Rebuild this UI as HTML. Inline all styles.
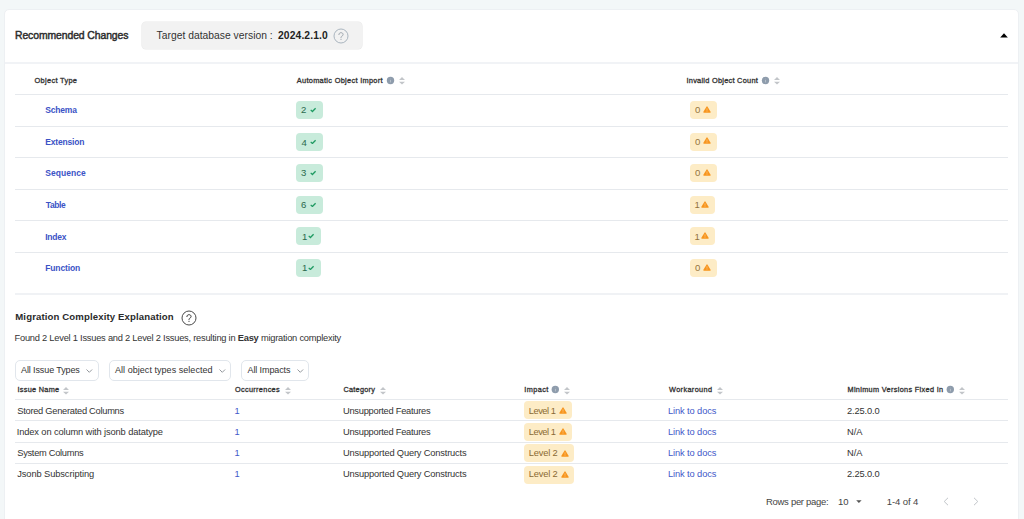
<!DOCTYPE html>
<html><head><meta charset="utf-8"><style>
html,body{margin:0;padding:0;}
body{width:1024px;height:519px;background:#f3f7f8;position:relative;overflow:hidden;font-family:"Liberation Sans",sans-serif;}
.card{position:absolute;left:4px;top:9px;width:1013px;height:540px;background:#fff;border:1px solid #edf0f3;border-radius:5px;}
.t{position:absolute;white-space:pre;line-height:0;}
.ic{position:absolute;}
.hl{position:absolute;height:1px;background:#e6e9ed;}
.sep{position:absolute;left:5px;width:1013px;top:62px;height:2px;background:#f1f3f6;}
.tdv{position:absolute;left:142px;top:22.2px;width:220px;height:27px;background:#f2f2f2;border-radius:4px;box-shadow:0 0 0 0.6px #e9e9e9;}
.q{position:absolute;}
.bg{position:absolute;height:18px;border-radius:4px;font-size:9.5px;line-height:18px;}
.bg span{position:absolute;left:5.5px;top:0;}
.bg svg{position:absolute;}
.g{background:#c8ebdb;color:#2d6f51;}
.o{background:#fdecc6;color:#9c7b3c;}
.dd{position:absolute;top:360.4px;height:18.6px;border:1px solid #e1e6ec;border-radius:5px;background:#fff;}
</style></head><body>
<div class="card"></div>
<div class="sep"></div>
<div class="tdv"></div>
<svg class="q" style="left:331.9px;top:26.799999999999997px" width="18" height="18" viewBox="0 0 18 18"><circle cx="9" cy="9" r="7" fill="none" stroke="#a2aeb9" stroke-width="0.9"/><path d="M6.9 7.6 C6.9 6.3 7.8 5.7 9 5.7 C10.2 5.7 11.1 6.4 11.1 7.5 C11.1 8.5 10.3 8.9 9.7 9.3 C9.2 9.6 9 10 9 10.8" stroke="#9ea6ae" stroke-width="1" fill="none" stroke-linecap="round"/><circle cx="9" cy="12.5" r="0.6" fill="#9ea6ae"/></svg>
<svg class="ic" style="left:1000px;top:32.9px" width="8" height="5" viewBox="0 0 8 5"><path d="M0.2 4.6 L4 0.3 L7.8 4.6Z" fill="#000"/></svg>
<svg class="q" style="left:179.7px;top:308.8px" width="18" height="18" viewBox="0 0 18 18"><circle cx="9" cy="9" r="7" fill="none" stroke="#4a4a4a" stroke-width="1.0"/><path d="M6.9 7.6 C6.9 6.3 7.8 5.7 9 5.7 C10.2 5.7 11.1 6.4 11.1 7.5 C11.1 8.5 10.3 8.9 9.7 9.3 C9.2 9.6 9 10 9 10.8" stroke="#3a3a3a" stroke-width="1" fill="none" stroke-linecap="round"/><circle cx="9" cy="12.5" r="0.6" fill="#3a3a3a"/></svg>
<div class="dd" style="left:15.3px;width:81.5px"></div>
<div class="dd" style="left:109.1px;width:119.5px"></div>
<div class="dd" style="left:241.1px;width:66px"></div>
<svg class="ic" style="left:85.8px;top:369.3px" width="7" height="4" viewBox="0 0 7 4"><path d="M0.5 0.5 L3.3 3.3 L6.1 0.5" stroke="#7a7f85" stroke-width="0.8" fill="none"/></svg>
<svg class="ic" style="left:218.6px;top:369.3px" width="7" height="4" viewBox="0 0 7 4"><path d="M0.5 0.5 L3.3 3.3 L6.1 0.5" stroke="#7a7f85" stroke-width="0.8" fill="none"/></svg>
<svg class="ic" style="left:296.6px;top:369.3px" width="7" height="4" viewBox="0 0 7 4"><path d="M0.5 0.5 L3.3 3.3 L6.1 0.5" stroke="#7a7f85" stroke-width="0.8" fill="none"/></svg>
<svg class="ic" style="left:855.8px;top:500px" width="6" height="3.5" viewBox="0 0 6 3.5"><path d="M0.2 0.2 L5.6 0.2 L2.9 3Z" fill="#555"/></svg>
<svg class="ic" style="left:943.2px;top:497px" width="6" height="9" viewBox="0 0 6 9"><path d="M5 0.8 L1.2 4.5 L5 8.2" stroke="#c0c4c8" stroke-width="1" fill="none"/></svg>
<svg class="ic" style="left:973px;top:497px" width="6" height="9" viewBox="0 0 6 9"><path d="M1 0.8 L4.8 4.5 L1 8.2" stroke="#c0c4c8" stroke-width="1" fill="none"/></svg>
<svg class="ic" style="left:385px;top:75px" width="10" height="10" viewBox="0 0 10 10"><circle cx="5.50" cy="5.50" r="3.7" fill="#8e9cac"/><rect x="5.17" y="5.00" width="0.66" height="2.4" fill="#c9d0d8"/><circle cx="5.50" cy="3.90" r="0.42" fill="#b5bec8"/></svg>
<svg class="ic" style="left:399px;top:77px" width="6" height="8" viewBox="0 0 6 8"><path d="M3 0 L6 2.9 L0 2.9Z M0 4.7 L6 4.7 L3 7.6Z" fill="#c2c5c9"/></svg>
<svg class="ic" style="left:760px;top:75px" width="10" height="10" viewBox="0 0 10 10"><circle cx="5.50" cy="5.50" r="3.7" fill="#8e9cac"/><rect x="5.17" y="5.00" width="0.66" height="2.4" fill="#c9d0d8"/><circle cx="5.50" cy="3.90" r="0.42" fill="#b5bec8"/></svg>
<svg class="ic" style="left:773.8px;top:77px" width="6" height="8" viewBox="0 0 6 8"><path d="M3 0 L6 2.9 L0 2.9Z M0 4.7 L6 4.7 L3 7.6Z" fill="#c2c5c9"/></svg>
<div class="hl" style="left:15px;width:993px;top:293px;height:2px;background:#f0f2f5"></div>
<div class="hl" style="left:15px;width:993px;top:94.0px"></div>
<div class="hl" style="left:15px;width:993px;top:125.5px"></div>
<div class="hl" style="left:15px;width:993px;top:157.1px"></div>
<div class="hl" style="left:15px;width:993px;top:188.6px"></div>
<div class="hl" style="left:15px;width:993px;top:220.2px"></div>
<div class="hl" style="left:15px;width:993px;top:251.7px"></div>
<div class="bg g" style="left:296px;top:101.00px;width:27px"><svg style="left:14.3px;top:6.2px" width="6.5" height="5.5" viewBox="0 0 6.5 5.5"><path d="M0.7 2.9 L2.4 4.5 L5.6 1.2" stroke="#1f9a62" stroke-width="1.3" fill="none"/></svg></div>
<div class="bg o" style="left:690px;top:101.00px;width:27px"><svg style="left:12.8px;top:4.9px" width="8" height="7" viewBox="0 0 8 7"><path d="M3.3 0.9 Q4 -0.2 4.7 0.9 L7.6 5.8 Q8.1 6.8 7 6.8 L1 6.8 Q-0.1 6.8 0.4 5.8Z" fill="#f7951d"/><rect x="3.65" y="2.3" width="0.7" height="2.4" fill="#fbc889"/><rect x="3.65" y="5.2" width="0.7" height="0.7" fill="#fbc889"/></svg></div>
<div class="bg g" style="left:296px;top:132.54px;width:27px"><svg style="left:14.3px;top:6.2px" width="6.5" height="5.5" viewBox="0 0 6.5 5.5"><path d="M0.7 2.9 L2.4 4.5 L5.6 1.2" stroke="#1f9a62" stroke-width="1.3" fill="none"/></svg></div>
<div class="bg o" style="left:690px;top:132.54px;width:27px"><svg style="left:12.8px;top:4.9px" width="8" height="7" viewBox="0 0 8 7"><path d="M3.3 0.9 Q4 -0.2 4.7 0.9 L7.6 5.8 Q8.1 6.8 7 6.8 L1 6.8 Q-0.1 6.8 0.4 5.8Z" fill="#f7951d"/><rect x="3.65" y="2.3" width="0.7" height="2.4" fill="#fbc889"/><rect x="3.65" y="5.2" width="0.7" height="0.7" fill="#fbc889"/></svg></div>
<div class="bg g" style="left:296px;top:164.08px;width:27px"><svg style="left:14.3px;top:6.2px" width="6.5" height="5.5" viewBox="0 0 6.5 5.5"><path d="M0.7 2.9 L2.4 4.5 L5.6 1.2" stroke="#1f9a62" stroke-width="1.3" fill="none"/></svg></div>
<div class="bg o" style="left:690px;top:164.08px;width:27px"><svg style="left:12.8px;top:4.9px" width="8" height="7" viewBox="0 0 8 7"><path d="M3.3 0.9 Q4 -0.2 4.7 0.9 L7.6 5.8 Q8.1 6.8 7 6.8 L1 6.8 Q-0.1 6.8 0.4 5.8Z" fill="#f7951d"/><rect x="3.65" y="2.3" width="0.7" height="2.4" fill="#fbc889"/><rect x="3.65" y="5.2" width="0.7" height="0.7" fill="#fbc889"/></svg></div>
<div class="bg g" style="left:296px;top:195.62px;width:27px"><svg style="left:14.3px;top:6.2px" width="6.5" height="5.5" viewBox="0 0 6.5 5.5"><path d="M0.7 2.9 L2.4 4.5 L5.6 1.2" stroke="#1f9a62" stroke-width="1.3" fill="none"/></svg></div>
<div class="bg o" style="left:690px;top:195.62px;width:25.2px"><svg style="left:10.9px;top:4.9px" width="8" height="7" viewBox="0 0 8 7"><path d="M3.3 0.9 Q4 -0.2 4.7 0.9 L7.6 5.8 Q8.1 6.8 7 6.8 L1 6.8 Q-0.1 6.8 0.4 5.8Z" fill="#f7951d"/><rect x="3.65" y="2.3" width="0.7" height="2.4" fill="#fbc889"/><rect x="3.65" y="5.2" width="0.7" height="0.7" fill="#fbc889"/></svg></div>
<div class="bg g" style="left:296px;top:227.16px;width:25px"><svg style="left:12.3px;top:6.2px" width="6.5" height="5.5" viewBox="0 0 6.5 5.5"><path d="M0.7 2.9 L2.4 4.5 L5.6 1.2" stroke="#1f9a62" stroke-width="1.3" fill="none"/></svg></div>
<div class="bg o" style="left:690px;top:227.16px;width:25.2px"><svg style="left:10.9px;top:4.9px" width="8" height="7" viewBox="0 0 8 7"><path d="M3.3 0.9 Q4 -0.2 4.7 0.9 L7.6 5.8 Q8.1 6.8 7 6.8 L1 6.8 Q-0.1 6.8 0.4 5.8Z" fill="#f7951d"/><rect x="3.65" y="2.3" width="0.7" height="2.4" fill="#fbc889"/><rect x="3.65" y="5.2" width="0.7" height="0.7" fill="#fbc889"/></svg></div>
<div class="bg g" style="left:296px;top:258.70px;width:25px"><svg style="left:12.3px;top:6.2px" width="6.5" height="5.5" viewBox="0 0 6.5 5.5"><path d="M0.7 2.9 L2.4 4.5 L5.6 1.2" stroke="#1f9a62" stroke-width="1.3" fill="none"/></svg></div>
<div class="bg o" style="left:690px;top:258.70px;width:27px"><svg style="left:12.8px;top:4.9px" width="8" height="7" viewBox="0 0 8 7"><path d="M3.3 0.9 Q4 -0.2 4.7 0.9 L7.6 5.8 Q8.1 6.8 7 6.8 L1 6.8 Q-0.1 6.8 0.4 5.8Z" fill="#f7951d"/><rect x="3.65" y="2.3" width="0.7" height="2.4" fill="#fbc889"/><rect x="3.65" y="5.2" width="0.7" height="0.7" fill="#fbc889"/></svg></div>
<div class="hl" style="left:15px;width:993px;top:398.7px"></div>
<div class="hl" style="left:15px;width:993px;top:420.1px"></div>
<div class="hl" style="left:15px;width:993px;top:441.6px"></div>
<div class="hl" style="left:15px;width:993px;top:463.1px"></div>
<svg class="ic" style="left:62.8px;top:386.5px" width="6" height="8" viewBox="0 0 6 8"><path d="M3 0 L6 2.9 L0 2.9Z M0 4.7 L6 4.7 L3 7.6Z" fill="#c2c5c9"/></svg>
<svg class="ic" style="left:284.5px;top:386.5px" width="6" height="8" viewBox="0 0 6 8"><path d="M3 0 L6 2.9 L0 2.9Z M0 4.7 L6 4.7 L3 7.6Z" fill="#c2c5c9"/></svg>
<svg class="ic" style="left:380px;top:386.5px" width="6" height="8" viewBox="0 0 6 8"><path d="M3 0 L6 2.9 L0 2.9Z M0 4.7 L6 4.7 L3 7.6Z" fill="#c2c5c9"/></svg>
<svg class="ic" style="left:564px;top:386.5px" width="6" height="8" viewBox="0 0 6 8"><path d="M3 0 L6 2.9 L0 2.9Z M0 4.7 L6 4.7 L3 7.6Z" fill="#c2c5c9"/></svg>
<svg class="ic" style="left:716.5px;top:386.5px" width="6" height="8" viewBox="0 0 6 8"><path d="M3 0 L6 2.9 L0 2.9Z M0 4.7 L6 4.7 L3 7.6Z" fill="#c2c5c9"/></svg>
<svg class="ic" style="left:958.8px;top:386.5px" width="6" height="8" viewBox="0 0 6 8"><path d="M3 0 L6 2.9 L0 2.9Z M0 4.7 L6 4.7 L3 7.6Z" fill="#c2c5c9"/></svg>
<svg class="ic" style="left:550px;top:384px" width="10" height="10" viewBox="0 0 10 10"><circle cx="5.30" cy="5.50" r="3.7" fill="#8e9cac"/><rect x="4.97" y="5.00" width="0.66" height="2.4" fill="#c9d0d8"/><circle cx="5.30" cy="3.90" r="0.42" fill="#b5bec8"/></svg>
<svg class="ic" style="left:945px;top:384px" width="10" height="10" viewBox="0 0 10 10"><circle cx="5.30" cy="5.50" r="3.7" fill="#8e9cac"/><rect x="4.97" y="5.00" width="0.66" height="2.4" fill="#c9d0d8"/><circle cx="5.30" cy="3.90" r="0.42" fill="#b5bec8"/></svg>
<div class="bg o lv" style="left:524px;top:401.10px;width:47.9px"><svg style="left:34.6px;top:5.7px" width="8" height="7" viewBox="0 0 8 7"><path d="M3.3 0.9 Q4 -0.2 4.7 0.9 L7.6 5.8 Q8.1 6.8 7 6.8 L1 6.8 Q-0.1 6.8 0.4 5.8Z" fill="#f7951d"/><rect x="3.65" y="2.3" width="0.7" height="2.4" fill="#fbc889"/><rect x="3.65" y="5.2" width="0.7" height="0.7" fill="#fbc889"/></svg></div>
<div class="bg o lv" style="left:524px;top:422.57px;width:47.9px"><svg style="left:34.6px;top:5.7px" width="8" height="7" viewBox="0 0 8 7"><path d="M3.3 0.9 Q4 -0.2 4.7 0.9 L7.6 5.8 Q8.1 6.8 7 6.8 L1 6.8 Q-0.1 6.8 0.4 5.8Z" fill="#f7951d"/><rect x="3.65" y="2.3" width="0.7" height="2.4" fill="#fbc889"/><rect x="3.65" y="5.2" width="0.7" height="0.7" fill="#fbc889"/></svg></div>
<div class="bg o lv" style="left:524px;top:444.04px;width:50.1px"><svg style="left:36.6px;top:5.7px" width="8" height="7" viewBox="0 0 8 7"><path d="M3.3 0.9 Q4 -0.2 4.7 0.9 L7.6 5.8 Q8.1 6.8 7 6.8 L1 6.8 Q-0.1 6.8 0.4 5.8Z" fill="#f7951d"/><rect x="3.65" y="2.3" width="0.7" height="2.4" fill="#fbc889"/><rect x="3.65" y="5.2" width="0.7" height="0.7" fill="#fbc889"/></svg></div>
<div class="bg o lv" style="left:524px;top:465.51px;width:50.1px"><svg style="left:36.6px;top:5.7px" width="8" height="7" viewBox="0 0 8 7"><path d="M3.3 0.9 Q4 -0.2 4.7 0.9 L7.6 5.8 Q8.1 6.8 7 6.8 L1 6.8 Q-0.1 6.8 0.4 5.8Z" fill="#f7951d"/><rect x="3.65" y="2.3" width="0.7" height="2.4" fill="#fbc889"/><rect x="3.65" y="5.2" width="0.7" height="0.7" fill="#fbc889"/></svg></div>
<div class="t" style="left:15.00px;top:36.40px;font-size:10.4px;font-weight:400;color:#2c2c2c;letter-spacing:-0.083px;-webkit-text-stroke:0.44px #2c2c2c">Recommended Changes</div>
<div class="t" style="left:156.50px;top:36.33px;font-size:10.3px;font-weight:400;color:#333;letter-spacing:0.026px">Target database version</div>
<div class="t" style="left:269.75px;top:36.33px;font-size:10.3px;font-weight:400;color:#333;letter-spacing:0.000px">:</div>
<div class="t" style="left:278.00px;top:36.33px;font-size:10.3px;font-weight:700;color:#222;letter-spacing:0.118px">2024.2.1.0</div>
<div class="t" style="left:34.50px;top:80.64px;font-size:7.4px;font-weight:400;color:#333;letter-spacing:0.317px;-webkit-text-stroke:0.31px #333">Object Type</div>
<div class="t" style="left:296.75px;top:80.64px;font-size:7.4px;font-weight:400;color:#333;letter-spacing:0.297px;-webkit-text-stroke:0.31px #333">Automatic Object Import</div>
<div class="t" style="left:686.50px;top:80.64px;font-size:7.4px;font-weight:400;color:#333;letter-spacing:0.250px;-webkit-text-stroke:0.31px #333">Invalid Object Count</div>
<div class="t" style="left:45.25px;top:110.05px;font-size:8.5px;font-weight:700;color:#3b53c6;letter-spacing:-0.175px">Schema</div>
<div class="t" style="left:301.00px;top:109.67px;font-size:9.6px;font-weight:400;color:#2b6a4d;letter-spacing:0.000px">2</div>
<div class="t" style="left:695.00px;top:109.67px;font-size:9.6px;font-weight:400;color:#94743d;letter-spacing:0.000px">0</div>
<div class="t" style="left:45.25px;top:142.05px;font-size:8.5px;font-weight:700;color:#3b53c6;letter-spacing:-0.178px">Extension</div>
<div class="t" style="left:301.50px;top:142.67px;font-size:9.6px;font-weight:400;color:#2b6a4d;letter-spacing:0.000px">4</div>
<div class="t" style="left:695.00px;top:141.67px;font-size:9.6px;font-weight:400;color:#94743d;letter-spacing:0.000px">0</div>
<div class="t" style="left:45.25px;top:173.05px;font-size:8.5px;font-weight:700;color:#3b53c6;letter-spacing:0.046px">Sequence</div>
<div class="t" style="left:301.00px;top:172.67px;font-size:9.6px;font-weight:400;color:#2b6a4d;letter-spacing:0.000px">3</div>
<div class="t" style="left:695.00px;top:172.67px;font-size:9.6px;font-weight:400;color:#94743d;letter-spacing:0.000px">0</div>
<div class="t" style="left:45.75px;top:205.05px;font-size:8.5px;font-weight:700;color:#3b53c6;letter-spacing:-0.398px">Table</div>
<div class="t" style="left:301.00px;top:204.67px;font-size:9.6px;font-weight:400;color:#2b6a4d;letter-spacing:0.000px">6</div>
<div class="t" style="left:694.50px;top:204.67px;font-size:9.6px;font-weight:400;color:#94743d;letter-spacing:0.000px">1</div>
<div class="t" style="left:45.25px;top:237.05px;font-size:8.5px;font-weight:700;color:#3b53c6;letter-spacing:-0.243px">Index</div>
<div class="t" style="left:302.00px;top:236.67px;font-size:9.6px;font-weight:400;color:#2b6a4d;letter-spacing:0.000px">1</div>
<div class="t" style="left:694.50px;top:236.67px;font-size:9.6px;font-weight:400;color:#94743d;letter-spacing:0.000px">1</div>
<div class="t" style="left:45.25px;top:268.05px;font-size:8.5px;font-weight:700;color:#3b53c6;letter-spacing:-0.134px">Function</div>
<div class="t" style="left:302.00px;top:267.67px;font-size:9.6px;font-weight:400;color:#2b6a4d;letter-spacing:0.000px">1</div>
<div class="t" style="left:695.00px;top:267.67px;font-size:9.6px;font-weight:400;color:#94743d;letter-spacing:0.000px">0</div>
<div class="t" style="left:15.25px;top:317.17px;font-size:9.6px;font-weight:700;color:#2a2a2a;letter-spacing:0.122px">Migration Complexity Explanation</div>
<div class="t" style="left:14.50px;top:337.78px;font-size:9.3px;font-weight:400;color:#333;letter-spacing:-0.232px">Found 2 Level 1 Issues and 2 Level 2 Issues, resulting in <b>Easy</b> migration complexity</div>
<div class="t" style="left:21.00px;top:370.28px;font-size:9px;font-weight:400;color:#333;letter-spacing:-0.109px">All Issue Types</div>
<div class="t" style="left:115.00px;top:370.28px;font-size:9px;font-weight:400;color:#333;letter-spacing:0.040px">All object types selected</div>
<div class="t" style="left:247.50px;top:370.28px;font-size:9px;font-weight:400;color:#333;letter-spacing:-0.101px">All Impacts</div>
<div class="t" style="left:17.50px;top:389.67px;font-size:7.3px;font-weight:400;color:#333;letter-spacing:0.292px;-webkit-text-stroke:0.31px #333">Issue Name</div>
<div class="t" style="left:235.00px;top:389.67px;font-size:7.3px;font-weight:400;color:#333;letter-spacing:0.329px;-webkit-text-stroke:0.31px #333">Occurrences</div>
<div class="t" style="left:343.50px;top:389.67px;font-size:7.3px;font-weight:400;color:#333;letter-spacing:0.256px;-webkit-text-stroke:0.31px #333">Category</div>
<div class="t" style="left:524.25px;top:389.67px;font-size:7.3px;font-weight:400;color:#333;letter-spacing:0.426px;-webkit-text-stroke:0.31px #333">Impact</div>
<div class="t" style="left:669.00px;top:389.67px;font-size:7.3px;font-weight:400;color:#333;letter-spacing:0.383px;-webkit-text-stroke:0.31px #333">Workaround</div>
<div class="t" style="left:847.50px;top:389.67px;font-size:7.3px;font-weight:400;color:#333;letter-spacing:0.332px;-webkit-text-stroke:0.31px #333">Minimum Versions Fixed In</div>
<div class="t" style="left:17.25px;top:410.58px;font-size:9.3px;font-weight:400;color:#333;letter-spacing:-0.273px">Stored Generated Columns</div>
<div class="t" style="left:234.50px;top:410.58px;font-size:9.3px;font-weight:400;color:#4258c9;letter-spacing:0.000px">1</div>
<div class="t" style="left:343.00px;top:410.58px;font-size:9.3px;font-weight:400;color:#333;letter-spacing:-0.256px">Unsupported Features</div>
<div class="t" style="left:668.00px;top:410.58px;font-size:9.3px;font-weight:400;color:#4258c9;letter-spacing:-0.110px">Link to docs</div>
<div class="t" style="left:528.75px;top:410.58px;font-size:9.3px;font-weight:400;color:#8a6932;letter-spacing:-0.468px">Level 1</div>
<div class="t" style="left:847.00px;top:410.58px;font-size:9.3px;font-weight:400;color:#333;letter-spacing:-0.133px">2.25.0.0</div>
<div class="t" style="left:16.75px;top:431.78px;font-size:9.3px;font-weight:400;color:#333;letter-spacing:-0.124px">Index on column with jsonb datatype</div>
<div class="t" style="left:234.50px;top:431.78px;font-size:9.3px;font-weight:400;color:#4258c9;letter-spacing:0.000px">1</div>
<div class="t" style="left:343.00px;top:431.78px;font-size:9.3px;font-weight:400;color:#333;letter-spacing:-0.256px">Unsupported Features</div>
<div class="t" style="left:668.00px;top:431.78px;font-size:9.3px;font-weight:400;color:#4258c9;letter-spacing:-0.110px">Link to docs</div>
<div class="t" style="left:528.75px;top:431.78px;font-size:9.3px;font-weight:400;color:#8a6932;letter-spacing:-0.468px">Level 1</div>
<div class="t" style="left:847.00px;top:431.78px;font-size:9.3px;font-weight:400;color:#333;letter-spacing:0.000px">N/A</div>
<div class="t" style="left:17.25px;top:452.88px;font-size:9.3px;font-weight:400;color:#333;letter-spacing:-0.297px">System Columns</div>
<div class="t" style="left:234.50px;top:452.88px;font-size:9.3px;font-weight:400;color:#4258c9;letter-spacing:0.000px">1</div>
<div class="t" style="left:343.00px;top:452.88px;font-size:9.3px;font-weight:400;color:#333;letter-spacing:-0.167px">Unsupported Query Constructs</div>
<div class="t" style="left:668.00px;top:452.88px;font-size:9.3px;font-weight:400;color:#4258c9;letter-spacing:-0.110px">Link to docs</div>
<div class="t" style="left:528.75px;top:452.88px;font-size:9.3px;font-weight:400;color:#8a6932;letter-spacing:-0.176px">Level 2</div>
<div class="t" style="left:847.00px;top:452.88px;font-size:9.3px;font-weight:400;color:#333;letter-spacing:0.000px">N/A</div>
<div class="t" style="left:17.25px;top:473.98px;font-size:9.3px;font-weight:400;color:#333;letter-spacing:-0.096px">Jsonb Subscripting</div>
<div class="t" style="left:234.50px;top:473.98px;font-size:9.3px;font-weight:400;color:#4258c9;letter-spacing:0.000px">1</div>
<div class="t" style="left:343.00px;top:473.98px;font-size:9.3px;font-weight:400;color:#333;letter-spacing:-0.167px">Unsupported Query Constructs</div>
<div class="t" style="left:668.00px;top:473.98px;font-size:9.3px;font-weight:400;color:#4258c9;letter-spacing:-0.110px">Link to docs</div>
<div class="t" style="left:528.75px;top:473.98px;font-size:9.3px;font-weight:400;color:#8a6932;letter-spacing:-0.176px">Level 2</div>
<div class="t" style="left:847.00px;top:473.98px;font-size:9.3px;font-weight:400;color:#333;letter-spacing:-0.133px">2.25.0.0</div>
<div class="t" style="left:766.00px;top:501.91px;font-size:9.5px;font-weight:400;color:#444;letter-spacing:-0.300px">Rows per page:</div>
<div class="t" style="left:837.90px;top:501.91px;font-size:9.5px;font-weight:400;color:#444;letter-spacing:0.000px">10</div>
<div class="t" style="left:886.75px;top:501.91px;font-size:9.5px;font-weight:400;color:#444;letter-spacing:-0.097px">1-4 of 4</div>
</body></html>
